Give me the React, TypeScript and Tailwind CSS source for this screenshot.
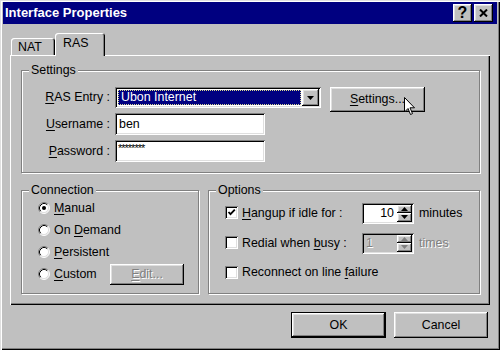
import type { ReactNode } from 'react';

const raised =
  'shadow-[inset_-1px_-1px_#000,inset_1px_1px_#fff,inset_-2px_-2px_#808080,inset_2px_2px_#dfdfdf]';
const sunken =
  'shadow-[inset_1px_1px_#808080,inset_-1px_-1px_#fff,inset_2px_2px_#000,inset_-2px_-2px_#dfdfdf]';
const etched = 'border border-[#808080] shadow-[1px_1px_0_#fff,inset_1px_1px_0_#fff]';

function Key({ children }: { children: ReactNode }) {
  return <span className="underline underline-offset-[2px] decoration-1">{children}</span>;
}

function GroupBox({ title, className, children }: { title: string; className: string; children: ReactNode }) {
  return (
    <div className={`relative ${etched} ${className}`}>
      <span className="absolute -top-[9px] left-[7px] bg-[#c0c0c0] px-[2px] leading-[16px]">{title}</span>
      {children}
    </div>
  );
}

function Arrow({ up, color = '#000' }: { up?: boolean; color?: string }) {
  return (
    <svg width="7" height="4" viewBox="0 0 7 4">
      <path d={up ? 'M3.5 0 L7 4 L0 4 Z' : 'M0 0 L7 0 L3.5 4 Z'} fill={color} />
    </svg>
  );
}

function Radio({ checked }: { checked?: boolean }) {
  return (
    <svg width="12" height="12" viewBox="0 0 12 12" className="shrink-0">
      <circle cx="6" cy="6" r="5" fill="#fff" />
      <path d="M2.11 9.89 A5.5 5.5 0 0 1 9.89 2.11" stroke="#808080" fill="none" />
      <path d="M9.89 2.11 A5.5 5.5 0 0 1 2.11 9.89" stroke="#fff" fill="none" />
      <path d="M2.82 9.18 A4.5 4.5 0 0 1 9.18 2.82" stroke="#000" fill="none" />
      <path d="M9.18 2.82 A4.5 4.5 0 0 1 2.82 9.18" stroke="#dfdfdf" fill="none" />
      {checked && <circle cx="6" cy="6" r="2" fill="#000" />}
    </svg>
  );
}

function Checkbox({ checked }: { checked?: boolean }) {
  return (
    <div className={`w-[13px] h-[13px] shrink-0 bg-white ${sunken} flex items-center justify-center`}>
      {checked && (
        <svg width="9" height="9" viewBox="0 0 9 9">
          <path d="M1.5 4 L3.5 6.2 L7.8 1.6" stroke="#000" strokeWidth="1.8" fill="none" />
        </svg>
      )}
    </div>
  );
}

function Spinner({ value, disabled }: { value: string; disabled?: boolean }) {
  const c = disabled ? '#808080' : '#000';
  return (
    <div className={`w-[52px] h-[21px] flex p-[2px] ${sunken} ${disabled ? 'bg-[#c0c0c0]' : 'bg-white'}`}>
      <div
        className={`flex-1 flex items-center ${
          disabled ? 'justify-start pl-[2px] text-[#808080] [text-shadow:1px_1px_0_#fff]' : 'justify-end pr-[3px]'
        }`}
      >
        {value}
      </div>
      <div className="w-[15px] flex flex-col">
        <div className={`h-[8px] bg-[#c0c0c0] flex items-center justify-center ${raised}`}>
          <Arrow up color={c} />
        </div>
        <div className={`h-[9px] bg-[#c0c0c0] flex items-center justify-center ${raised}`}>
          <Arrow color={c} />
        </div>
      </div>
    </div>
  );
}

export default function App() {
  return (
    <div className="relative w-[500px] h-[350px] overflow-hidden bg-[#c0c0c0] px-[3px] pt-[2px] font-['Liberation_Sans',Arial,sans-serif] text-[12.4px] text-black shadow-[inset_1px_1px_#dfdfdf,inset_2px_2px_#fff,inset_-1px_-1px_#000,inset_-2px_-2px_#808080]">
      {/* title bar */}
      <div className="flex h-[22px] items-center bg-[#000080] pl-[2px] pr-[4px]">
        <span className="flex-1 text-[13px] font-bold text-white">Interface Properties</span>
        <div className="flex gap-[2px]">
          <div className={`w-[19px] h-[18px] bg-[#c0c0c0] ${raised} flex items-center justify-center text-[16px] font-bold leading-none`}>
            ?
          </div>
          <div className={`w-[19px] h-[18px] bg-[#c0c0c0] ${raised} flex items-center justify-center`}>
            <svg width="9" height="8" viewBox="0 0 9 8">
              <path d="M1 0.5 L8 7.5 M8 0.5 L1 7.5" stroke="#000" strokeWidth="2" />
            </svg>
          </div>
        </div>
      </div>

      <div className="px-[7px] pt-[9px]">
        {/* tabs */}
        <div className="flex h-[22px] items-end pl-[1px]">
          <div className="w-[44px] h-[17px] rounded-t-[3px] pl-[7px] pt-[2px] leading-[14px] shadow-[inset_1px_1px_#fff,inset_-1px_0_#000,inset_-2px_0_#808080]">
            NAT
          </div>
          <div className="relative z-10 -mb-[1px] w-[50px] h-[23px] rounded-t-[3px] bg-[#c0c0c0] pl-[8px] pt-[3px] leading-[14px] shadow-[inset_1px_1px_#fff,inset_-1px_0_#000,inset_-2px_0_#808080]">
            RAS
          </div>
        </div>

        {/* panel */}
        <div className="w-[480px] h-[250px] pl-[11px] pt-[15px] shadow-[inset_1px_1px_#fff,inset_-1px_-1px_#000,inset_-2px_-2px_#808080]">
          <GroupBox title="Settings" className="w-[459px] h-[103px] pt-[16px]">
            <div className="flex items-start">
              <div className="w-[88px] h-[21px] flex items-center justify-end">
                <span><Key>R</Key>AS Entry :</span>
              </div>
              <div className={`ml-[5px] w-[206px] h-[21px] flex p-[2px] bg-white ${sunken}`}>
                <div className="flex-1 m-[1px] flex items-center bg-[#000080] pl-[2px] text-white border border-dotted border-[#d8d890]">
                  Ubon Internet
                </div>
                <div className={`w-[17px] bg-[#c0c0c0] flex items-center justify-center ${raised}`}>
                  <Arrow />
                </div>
              </div>
              <div className={`ml-[9px] w-[95px] h-[25px] bg-[#c0c0c0] flex items-center justify-center ${raised}`}>
                <span><Key>S</Key>ettings...</span>
              </div>
            </div>
            <div className="mt-[1px] flex items-center">
              <div className="w-[88px] text-right">
                <Key>U</Key>sername :
              </div>
              <div className={`ml-[5px] w-[150px] h-[22px] flex items-center bg-white pl-[4px] ${sunken}`}>ben</div>
            </div>
            <div className="mt-[5px] flex items-center">
              <div className="w-[88px] text-right">
                <Key>P</Key>assword :
              </div>
              <div className={`ml-[5px] w-[150px] h-[22px] bg-white pl-[3px] pt-[3px] text-[11px] leading-none tracking-[-1px] ${sunken}`}>
                ********
              </div>
            </div>
          </GroupBox>

          <div className="mt-[17px] flex gap-[9px]">
            <GroupBox title="Connection" className="w-[178px] h-[104px] pt-[6px] pl-[16px]">
              <div className="h-[22px] flex items-center gap-[4px]">
                <Radio checked />
                <span><Key>M</Key>anual</span>
              </div>
              <div className="h-[22px] flex items-center gap-[4px]">
                <Radio />
                <span>On <Key>D</Key>emand</span>
              </div>
              <div className="h-[22px] flex items-center gap-[4px]">
                <Radio />
                <span><Key>P</Key>ersistent</span>
              </div>
              <div className="h-[22px] flex items-center">
                <div className="w-[72px] flex items-center gap-[4px]">
                  <Radio />
                  <span><Key>C</Key>ustom</span>
                </div>
                <div className={`w-[74px] h-[21px] bg-[#c0c0c0] flex items-center justify-center text-[#808080] [text-shadow:1px_1px_0_#fff] ${raised}`}>
                  <span><Key>E</Key>dit...</span>
                </div>
              </div>
            </GroupBox>

            <GroupBox title="Options" className="w-[272px] h-[104px] pt-[12px] pl-[16px]">
              <div className="h-[20px] flex items-center">
                <div className="w-[137px] flex items-center gap-[4px]">
                  <Checkbox checked />
                  <span><Key>H</Key>angup if idle for :</span>
                </div>
                <Spinner value="10" />
                <span className="ml-[5px]">minutes</span>
              </div>
              <div className="mt-[10px] h-[20px] flex items-center">
                <div className="w-[137px] flex items-center gap-[4px]">
                  <Checkbox />
                  <span>Redial when <Key>b</Key>usy :</span>
                </div>
                <Spinner value="1" disabled />
                <span className="ml-[5px] text-[#808080] [text-shadow:1px_1px_0_#fff]">times</span>
              </div>
              <div className="mt-[9px] h-[20px] flex items-center gap-[4px]">
                <Checkbox />
                <span>Reconnect on line <Key>f</Key>ailure</span>
              </div>
            </GroupBox>
          </div>
        </div>

        {/* dialog buttons */}
        <div className="mt-[7px] w-[480px] flex justify-end gap-[8px] pr-[2px]">
          <div className={`w-[95px] h-[26px] bg-[#c0c0c0] flex items-center justify-center border border-black ${raised}`}>
            OK
          </div>
          <div className={`w-[94px] h-[26px] bg-[#c0c0c0] flex items-center justify-center ${raised}`}>Cancel</div>
        </div>
      </div>

      {/* mouse pointer over Settings... */}
      <svg className="absolute left-[404px] top-[97px]" width="12" height="19" viewBox="0 0 12 19">
        <path d="M0.5 0.5 L0.5 15 L4 11.5 L6.5 17.5 L8.5 16.6 L6 10.8 L10.5 10.8 Z" fill="#fff" stroke="#000" />
      </svg>
    </div>
  );
}
